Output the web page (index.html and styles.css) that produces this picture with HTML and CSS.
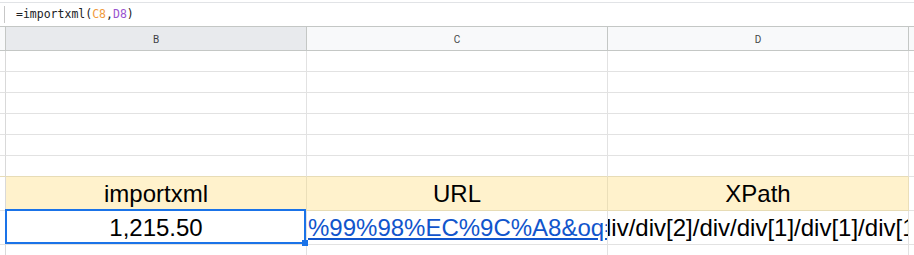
FILE: index.html
```html
<!DOCTYPE html>
<html>
<head>
<meta charset="utf-8">
<link rel="stylesheet" href="styles.css">
</head>
<body>
<div class="formula-bar">
  <span class="fx-divider"></span>
  <code class="formula">=importxml(<span class="ref-c">C8</span>,<span class="ref-d">D8</span>)</code>
</div>
<div class="sheet">
  <div class="hd corner"></div>
  <div class="hd col-head selected">B</div>
  <div class="hd col-head">C</div>
  <div class="hd col-head">D</div>
  <div class="hd col-head edge"></div>

  <div class="rh"></div><div class="cell"></div><div class="cell"></div><div class="cell"></div><div class="cell edge"></div>
  <div class="rh"></div><div class="cell"></div><div class="cell"></div><div class="cell"></div><div class="cell edge"></div>
  <div class="rh"></div><div class="cell"></div><div class="cell"></div><div class="cell"></div><div class="cell edge"></div>
  <div class="rh"></div><div class="cell"></div><div class="cell"></div><div class="cell"></div><div class="cell edge"></div>
  <div class="rh"></div><div class="cell"></div><div class="cell"></div><div class="cell"></div><div class="cell edge"></div>
  <div class="rh tan-below"></div><div class="cell tan-below"></div><div class="cell tan-below"></div><div class="cell tan-below"></div><div class="cell edge"></div>

  <div class="rh"></div>
  <div class="cell yellow big center">importxml</div>
  <div class="cell yellow big center">URL</div>
  <div class="cell yellow big center">XPath</div>
  <div class="cell edge"></div>

  <div class="rh"></div>
  <div class="cell big center active">1,215.50</div>
  <div class="cell big clip"><span class="link">%99%98%EC%9C%A8&amp;oq=%EC%82%BC%EC%84%B1%EC%A0%84%EC%9E%90</span></div>
  <div class="cell big clip"><span class="xpath">div/div[2]/div/div[1]/div[1]/div[1]/div[2]/span</span></div>
  <div class="cell edge"></div>

  <div class="rh"></div><div class="cell"></div><div class="cell"></div><div class="cell"></div><div class="cell edge"></div>
</div>
</body>
</html>
```

FILE: styles.css
```css
html, body {
  margin: 0;
  padding: 0;
  background: #ffffff;
  overflow: hidden;
}

.formula-bar {
  margin-top: 2px;
  height: 23px;
  border-top: 1px solid #e1e3e6;
  display: flex;
  align-items: center;
  box-sizing: content-box;
}

.fx-divider {
  width: 1px;
  height: 17px;
  margin-left: 4px;
  background: #c7c7c7;
  align-self: flex-start;
  margin-top: 3px;
}

.formula {
  margin-left: 11px;
  font-family: "DejaVu Sans Mono", "Liberation Mono", monospace;
  font-size: 11.5px;
  color: #202124;
  line-height: 14px;
  margin-top: -2px;
}

.ref-c { color: #f09a3e; }
.ref-d { color: #9a55cf; }

.sheet {
  display: grid;
  grid-template-columns: 6px 301px 301px 301px 1fr;
  grid-template-rows: 25px repeat(6, 21px) 34px 34px 21px;
}

.sheet > div {
  box-sizing: border-box;
  min-width: 0;
}

.hd {
  background: #f8f9fa;
  border-top: 1px solid #c4c7c5;
  border-bottom: 1px solid #c4c7c5;
  border-right: 1px solid #c4c7c5;
}

.col-head {
  display: flex;
  align-items: center;
  justify-content: center;
  font-family: Roboto, "Liberation Sans", Arial, sans-serif;
  font-size: 10px;
  color: #444746;
  padding-top: 1px;
}

.col-head.selected {
  background: #e8eaed;
  color: #3c4043;
}

.col-head.edge { border-right: none; }

.rh {
  background: #ffffff;
  border-right: 1px solid #d9d9d9;
  border-bottom: 1px solid #e2e2e2;
}

.cell {
  border-right: 1px solid #e2e2e2;
  border-bottom: 1px solid #e2e2e2;
  position: relative;
}

.cell.edge { border-right: none; }

.tan-below { border-bottom-color: #e7dcb6; }

.yellow {
  background: #fff2cc;
  border-right-color: #ebdfb9;
  border-bottom-color: #e7dcb6;
}

.big {
  font-family: "Liberation Sans", Arial, sans-serif;
  font-size: 24px;
  line-height: 24px;
  color: #000000;
  white-space: nowrap;
  display: flex;
  align-items: flex-end;
  padding-bottom: 4px;
}

.center { justify-content: center; }

.clip {
  overflow: hidden;
}

.link {
  color: #1155cc;
  text-decoration: underline;
  padding-left: 1px;
}

.xpath {
  margin-left: -10px;
  color: #000000;
}

.active::after {
  content: "";
  position: absolute;
  left: -1px;
  top: -2px;
  right: 0;
  bottom: 0;
  border: 2px solid #1a73e8;
  pointer-events: none;
}

.active::before {
  content: "";
  position: absolute;
  width: 6px;
  height: 6px;
  right: -2px;
  bottom: -2px;
  background: #1a73e8;
  z-index: 2;
}
```
